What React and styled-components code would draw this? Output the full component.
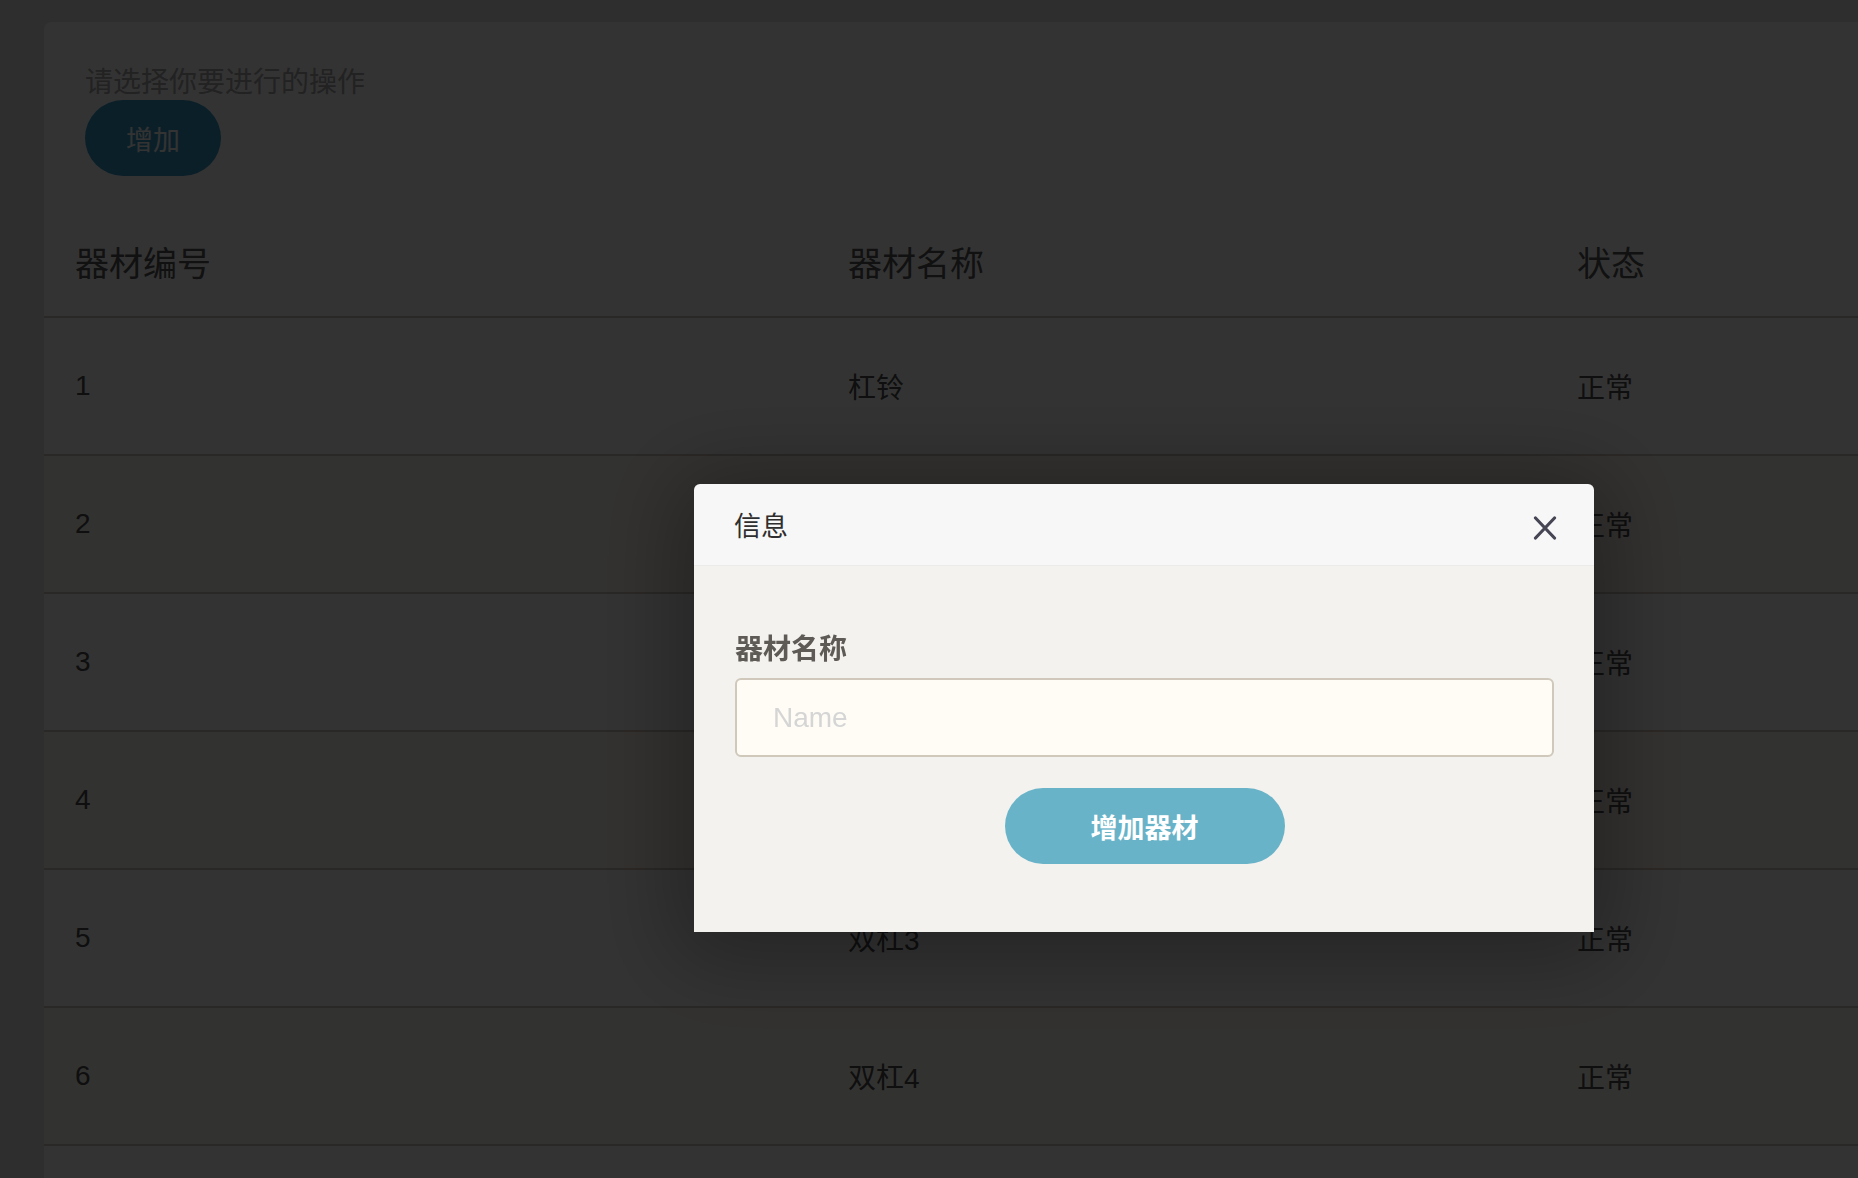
import React from "react";
import styled, { createGlobalStyle } from "styled-components";

const GlobalStyle = createGlobalStyle`
  html, body {
    margin: 0;
    padding: 0;
    background: #e6e6e6;
    overflow: hidden;
    font-family: "Liberation Sans", "Noto Sans CJK SC", sans-serif;
  }
`;

const rows = [
  { id: 1, name: "杠铃", state: "正常" },
  { id: 2, name: "哑铃", state: "正常" },
  { id: 3, name: "双杠1", state: "正常" },
  { id: 4, name: "双杠2", state: "正常" },
  { id: 5, name: "双杠3", state: "正常" },
  { id: 6, name: "双杠4", state: "正常" },
];

const App = () => {
  return (
    <>
      <GlobalStyle />
      <Page>
        <Card>
          <Head>
            <Prompt>请选择你要进行的操作</Prompt>
            <AddButton>增加</AddButton>
          </Head>
          <Table>
            <Row $head>
              <Cell $head>器材编号</Cell>
              <Cell $head>器材名称</Cell>
              <Cell $head>状态</Cell>
            </Row>
            {rows.map((r, i) => (
              <Row key={r.id} $striped={i % 2 === 1}>
                <Cell>{r.id}</Cell>
                <Cell>{r.name}</Cell>
                <Cell>{r.state}</Cell>
              </Row>
            ))}
          </Table>
        </Card>
      </Page>

      <Overlay>
        <Modal>
          <ModalHeader>
            <ModalTitle>信息</ModalTitle>
            <CloseButton aria-label="close">
              <svg width="26" height="24" viewBox="0 0 26 24">
                <path d="M3.5 2 L22.5 22 M22.5 2 L3.5 22" stroke="#454554" strokeWidth="3.2" strokeLinecap="round" fill="none" />
              </svg>
            </CloseButton>
          </ModalHeader>
          <ModalBody>
            <Label>器材名称</Label>
            <Input placeholder="Name" />
            <SubmitButton>增加器材</SubmitButton>
          </ModalBody>
        </Modal>
      </Overlay>
    </>
  );
};

const Page = styled.div`
  padding: 22px 0 0 44px;
  height: 100vh;
  box-sizing: border-box;
  overflow: hidden;
`;

const Card = styled.section`
  background: #ffffff;
  border-radius: 8px 0 0 0;
  height: 1200px;
`;

const Head = styled.div`
  padding: 40px 41px 0;
  display: flex;
  flex-direction: column;
  align-items: flex-start;
`;

const Prompt = styled.p`
  margin: 0;
  font-family: "Noto Sans CJK SC", sans-serif;
  font-size: 28px;
  line-height: 36px;
  color: #a8a8a8;
`;

const AddButton = styled.button`
  margin-top: 2px;
  width: 136px;
  height: 76px;
  border: none;
  border-radius: 38px;
  background: #379bc8;
  color: #ffffff;
  font-family: "Noto Sans CJK SC", sans-serif;
  font-size: 27px;
  cursor: pointer;
`;

const Table = styled.div`
  margin-top: 31px;
  display: flex;
  flex-direction: column;
`;

const Row = styled.div`
  display: grid;
  grid-template-columns: 773px 729px 1fr;
  align-items: center;
  box-sizing: border-box;
  height: ${(p) => (p.$head ? "111px" : "138px")};
  border-bottom: 2px solid #d2c6bc;
  background: ${(p) => (p.$striped ? "#fbf8f2" : "#ffffff")};
`;

const Cell = styled.div`
  padding-left: 31px;
  font-family: "Liberation Sans", "Noto Sans CJK SC", sans-serif;
  font-size: ${(p) => (p.$head ? "34px" : "28px")};
  color: ${(p) => (p.$head ? "#555555" : "#4c4c4c")};
`;

const Overlay = styled.div`
  position: fixed;
  inset: 0;
  background: rgba(0, 0, 0, 0.8);
`;

const Modal = styled.div`
  margin: 484px 0 0 694px;
  width: 900px;
  border-radius: 6px 6px 0 0;
  overflow: hidden;
  box-shadow: 0 10px 90px 20px rgba(0, 0, 0, 0.3);
`;

const ModalHeader = styled.div`
  height: 82px;
  box-sizing: border-box;
  padding: 0 36px 0 40px;
  display: flex;
  align-items: center;
  justify-content: space-between;
  background: #f7f7f7;
  border-bottom: 1px solid #ebebe9;
`;

const ModalTitle = styled.h3`
  margin: 0;
  font-family: "Noto Sans CJK SC", sans-serif;
  font-weight: 400;
  font-size: 27px;
  color: #2e2e2e;
`;

const CloseButton = styled.button`
  border: none;
  background: transparent;
  padding: 0;
  display: flex;
  margin-top: 6px;
  cursor: pointer;
`;

const ModalBody = styled.div`
  background: #f3f2ef;
  padding: 62px 40px 68px 41px;
  display: flex;
  flex-direction: column;
`;

const Label = styled.label`
  font-family: "Noto Sans CJK SC", sans-serif;
  font-weight: 700;
  font-size: 28px;
  line-height: 39px;
  color: #5e5a55;
`;

const Input = styled.input`
  margin-top: 11px;
  height: 79px;
  box-sizing: border-box;
  border: 2px solid #cfc8bb;
  border-radius: 6px;
  background: #fefcf5;
  padding: 0 36px;
  font-family: "Liberation Sans", sans-serif;
  font-size: 28px;
  color: #333;
  outline: none;

  &::placeholder {
    color: #d5d5d5;
  }
`;

const SubmitButton = styled.button`
  margin: 31px auto 0;
  width: 280px;
  height: 76px;
  border: none;
  border-radius: 38px;
  background: #69b3c8;
  color: #ffffff;
  font-family: "Noto Sans CJK SC", sans-serif;
  font-weight: 700;
  font-size: 27px;
  cursor: pointer;
`;

export default App;
